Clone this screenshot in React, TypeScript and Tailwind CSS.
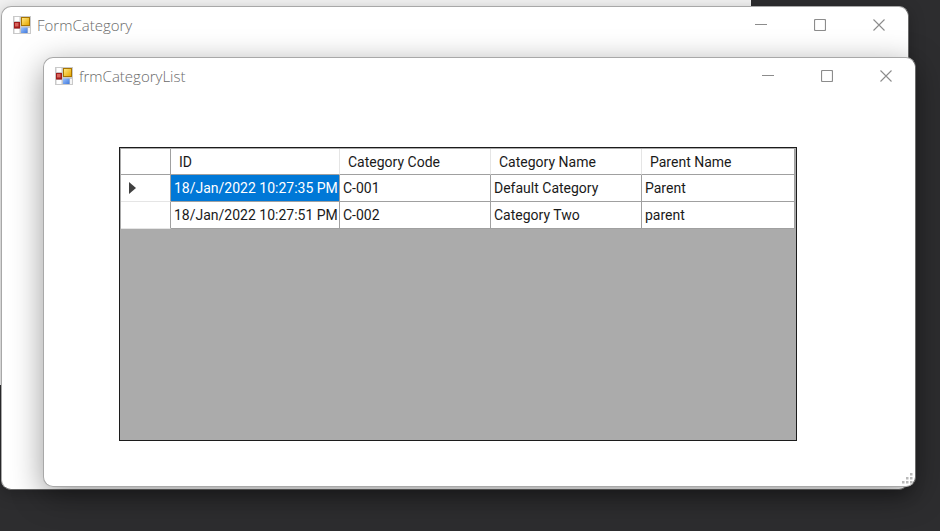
import { ReactNode } from "react";

const rows = [
  { id: "18/Jan/2022 10:27:35 PM", code: "C-001", name: "Default Category", parent: "Parent" },
  { id: "18/Jan/2022 10:27:51 PM", code: "C-002", name: "Category Two", parent: "parent" },
];

function FormIcon() {
  return (
    <svg className="h-[18px] w-[18px] shrink-0" viewBox="0 0 18 18" aria-hidden="true">
      <defs>
        <linearGradient id="yellow" x1="0" y1="0" x2="1" y2="1">
          <stop offset="0" stopColor="#ffe680" />
          <stop offset="1" stopColor="#e6a800" />
        </linearGradient>
        <linearGradient id="blue" x1="0" y1="0" x2="1" y2="1">
          <stop offset="0" stopColor="#9cc4ff" />
          <stop offset="1" stopColor="#3f78dc" />
        </linearGradient>
      </defs>
      <rect width="18" height="18" fill="#c9c9c9" />
      <rect x="1.5" y="1" width="5" height="4" fill="#fff" />
      <rect x="1.5" y="13" width="5" height="4" fill="#fff" />
      <rect x="15" y="12" width="2" height="5" fill="#f4f4f4" />
      <rect x="1" y="6" width="6" height="6.5" fill="#a01c1c" />
      <rect x="2" y="7" width="3.5" height="3.5" fill="#d9645c" />
      <rect x="8" y="1" width="9" height="9" fill="#a87400" />
      <rect x="9" y="2" width="7" height="7" fill="url(#yellow)" />
      <rect x="8" y="11.5" width="6.5" height="5.5" fill="url(#blue)" />
    </svg>
  );
}

function ControlButton({ label, children }: { label: string; children: ReactNode }) {
  return (
    <button type="button" aria-label={label} className="flex h-full w-[59px] items-center justify-center">
      <svg className="h-3 w-3" viewBox="0 0 12 12" fill="none" stroke="#8c8c8c" aria-hidden="true">
        {children}
      </svg>
    </button>
  );
}

function TitleBar({ title }: { title: string }) {
  return (
    <header className="flex h-9 shrink-0 items-center pl-[11px]">
      <FormIcon />
      <h1 className="ml-1.5 flex-1 font-['Open_Sans','Noto_Sans',sans-serif] text-[15px] leading-5 font-light text-[#6a6a6a]">
        {title}
      </h1>
      <div className="flex h-full">
        <ControlButton label="Minimize">
          <path d="M0 5.5h12" />
        </ControlButton>
        <ControlButton label="Maximize">
          <rect x="0.5" y="0.5" width="11" height="11" rx="1" strokeWidth="1.2" />
        </ControlButton>
        <ControlButton label="Close">
          <path d="M0.5 0.5l11 11M11.5 0.5l-11 11" strokeWidth="1.1" />
        </ControlButton>
      </div>
    </header>
  );
}

function CategoryGrid() {
  const head = "border-r border-b border-r-[#e5e5e5] border-b-[#a0a0a0] pl-2 text-left font-normal last:border-r-[#a0a0a0]";
  const cell = "border-r border-b border-[#a0a0a0] pl-[3px]";
  return (
    <div className="flex-1 border border-[#1c1c1c] bg-[#ababab] p-px">
      <table className="w-full table-fixed border-separate border-spacing-0 bg-white font-['Roboto','Liberation_Sans',sans-serif] text-[14px] leading-5 whitespace-nowrap text-[#1a1a1a]">
        <colgroup>
          <col className="w-[50px]" />
          <col className="w-[169px]" />
          <col className="w-[151px]" />
          <col className="w-[151px]" />
          <col />
        </colgroup>
        <thead>
          <tr className="h-[26px]">
            <td className="border-r border-b border-[#a0a0a0]" />
            <th scope="col" className={head}>ID</th>
            <th scope="col" className={head}>Category Code</th>
            <th scope="col" className={head}>Category Name</th>
            <th scope="col" className={head}>Parent Name</th>
          </tr>
        </thead>
        <tbody>
          {rows.map((row, i) => (
            <tr key={row.code} className="h-[27px]">
              <td className="border-r border-b border-r-[#a0a0a0] border-b-[#e5e5e5] pl-2">
                {i === 0 && (
                  <svg className="h-3 w-[7px]" viewBox="0 0 7 12" aria-hidden="true">
                    <path d="M0 0l7 6-7 6z" fill="#404040" />
                  </svg>
                )}
              </td>
              <td className={i === 0 ? `${cell} bg-[#0078d7] text-white` : cell}>{row.id}</td>
              <td className={cell}>{row.code}</td>
              <td className={cell}>{row.name}</td>
              <td className={cell}>{row.parent}</td>
            </tr>
          ))}
        </tbody>
      </table>
    </div>
  );
}

function ResizeGrip() {
  return (
    <svg className="absolute right-[2px] bottom-[2px] h-[11px] w-[11px]" viewBox="0 0 11 11" fill="#b9b9b9" aria-hidden="true">
      <path d="M8 0h2.500v2.500h-2.500zM4 4h2.500v2.500h-2.500zM8 4h2.500v2.500h-2.500zM0 8h2.500v2.500h-2.500zM4 8h2.500v2.500h-2.500zM8 8h2.500v2.500h-2.500z" />
    </svg>
  );
}

export default function App() {
  return (
    <main className="relative h-screen overflow-hidden bg-[#2d2d2f]">
      <div className="absolute top-0 right-[189px] bottom-[146px] left-0 bg-[#f2f2f2]" />
      <section
        aria-label="FormCategory"
        className="absolute top-[6px] right-[31px] bottom-[41px] left-px flex flex-col overflow-hidden rounded-[10px] border border-[#a8a8a8] border-r-[#6a6a6a] border-b-[#6a6a6a] bg-white shadow-[0_4px_16px_rgba(0,0,0,0.25)]"
      >
        <TitleBar title="FormCategory" />
      </section>
      <section
        aria-label="frmCategoryList"
        className="absolute top-[57px] right-[24px] bottom-[44px] left-[43px] flex flex-col rounded-[10px] border border-[#a8a8a8] border-r-[#6a6a6a] bg-white shadow-[0_8px_32px_rgba(0,0,0,0.4)]"
      >
        <TitleBar title="frmCategoryList" />
        <div className="flex flex-1 pt-[53px] pr-[118px] pb-[45px] pl-[75px]">
          <CategoryGrid />
        </div>
        <ResizeGrip />
      </section>
    </main>
  );
}
